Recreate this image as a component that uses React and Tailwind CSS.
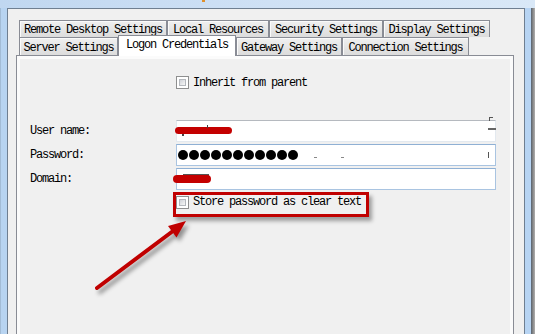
import React from 'react';

const mono = "font-[family-name:'Liberation_Mono',monospace] text-[12px] tracking-[-1.2px] text-black leading-none whitespace-nowrap";

function Tab({ label, w, selected }) {
  if (selected) {
    return (
      <div className={`${w} relative z-10 -mt-[2px] h-[21px] shrink-0 bg-white border border-b-0 border-[#898c95] flex justify-center pt-[3px]`}>
        <span className={mono}>{label}</span>
      </div>
    );
  }
  return (
    <div className={`${w} h-full shrink-0 bg-gradient-to-b from-[#f0f0f0] to-[#dcdcdc] border border-b-0 border-[#898c95] shadow-[inset_1px_1px_0_#fafafa] flex items-center justify-center pt-[2px]`}>
      <span className={mono}>{label}</span>
    </div>
  );
}

function Check() {
  return (
    <div className="w-[13px] h-[13px] shrink-0 border border-[#8e8f8f] bg-white p-[2px]">
      <div className="w-full h-full border border-[#b4b8bd] bg-gradient-to-br from-[#d0d3d8] to-[#f7f7f7]" />
    </div>
  );
}

function Field({ label, children }) {
  return (
    <div className="flex items-center h-[22px] shrink-0">
      <div className={`w-[156px] pl-[10px] ${mono}`}>{label}</div>
      {children}
    </div>
  );
}

export default function App() {
  return (
    <div className="w-[535px] h-[334px] overflow-hidden relative flex flex-col bg-[#c5dbf2]">
      {/* title bar remnant */}
      <div className="h-[8px] shrink-0 bg-gradient-to-r from-[#c0d7f0] via-[#cfe1f5] to-[#d9e8f7] flex">
        <div className="ml-[202px] w-[3px] h-[2px] bg-[#e0902a]" />
      </div>

      <div className="flex flex-1 min-h-0">
        <div className="w-[7px] shrink-0 bg-[#b8d4f1] border-l border-[#a3bcd6]" />

        <div className="w-[518px] shrink-0 overflow-hidden border-l border-t border-r border-[#6f7f91] bg-[#f0f0f0] pl-[8px] pr-[10px] pt-[11px] flex flex-col">
          {/* tab rows */}
          <div className="flex ml-[3px] h-[17px] shrink-0">
            <Tab label="Remote Desktop Settings" w="w-[148px]" />
            <Tab label="Local Resources" w="w-[102px]" />
            <Tab label="Security Settings" w="w-[114px]" />
            <Tab label="Display Settings" w="w-[107px]" />
          </div>
          <div className="flex ml-[3px] h-[18px] shrink-0">
            <Tab label="Server Settings" w="w-[99px]" />
            <Tab label="Logon Credentials" w="w-[118px]" selected />
            <Tab label="Gateway Settings" w="w-[106px]" />
            <Tab label="Connection Settings" w="w-[127px]" />
          </div>

          {/* tab panel */}
          <div className="h-[300px] shrink-0 border border-[#898c95] bg-[#fbfbfb] p-[3px]">
            <div className="h-full bg-[#f0f0f0] flex flex-col">
              <div className="mt-[17px] pl-[156px] flex items-center gap-[4px] h-[13px] shrink-0">
                <Check />
                <span className={mono}>Inherit from parent</span>
              </div>

              <div className="mt-[31px] flex flex-col gap-[2px] shrink-0">
                <Field label="User name:">
                  <div className="relative w-[320px] h-full bg-white border border-[#e3e9ef] border-t-[#b5b9bf]">
                    <div className="absolute left-[-2px] top-[6px] w-[57px] h-[7px] rounded-full bg-[#c40000] blur-[0.3px]" />
                    <div className="absolute left-[5px] top-[13px] w-[2px] h-[2px] bg-[#444]" />
                    <div className="absolute left-[30px] top-[4px] w-[1px] h-[3px] bg-[#444]" />
                    <div className="absolute right-[2px] top-[-4px] w-[4px] h-[4px] border-l border-t border-[#555]" />
                    <div className="absolute right-[-1px] top-[7px] w-[8px] h-[2px] bg-[#666]" />
                  </div>
                </Field>
                <Field label="Password:">
                  <div className="w-[320px] h-full bg-white border border-[#a9c4e1] border-t-[#8fb0d4] flex items-center pl-[1px]">
                    <div className="flex gap-[1px]">
                      {Array.from({ length: 11 }).map((_, i) => (
                        <div key={i} className="w-[10px] h-[10px] rounded-full bg-black" />
                      ))}
                    </div>
                    <div className="ml-[16px] mt-[5px] w-[3px] h-[1px] bg-[#888]" />
                    <div className="ml-[24px] mt-[5px] w-[3px] h-[1px] bg-[#888]" />
                    <div className="ml-auto mr-[6px] w-[1px] h-[6px] bg-[#555]" />
                  </div>
                </Field>
                <Field label="Domain:">
                  <div className="relative w-[320px] h-full bg-white border border-[#a9c4e1] border-t-[#8fb0d4]">
                    <div className="absolute left-[6px] top-[5px] w-[26px] h-[2px] bg-[#555]" />
                    <div className="absolute left-[-4px] top-[6px] w-[38px] h-[8px] rounded-full bg-[#c40000] blur-[0.3px]" />
                  </div>
                </Field>
              </div>

              <div className="relative mt-[2px] h-[25px] shrink-0 pl-[156px] pt-[4px] flex items-start gap-[4px]">
                <Check />
                <span className={mono}>Store password as clear text</span>
                <div className="absolute left-[153px] top-0 w-[196px] h-[25px] border-[3px] border-[#c00000] shadow-[3px_4px_4px_rgba(0,0,0,0.35)]" />
              </div>
            </div>
          </div>
        </div>

        <div className="w-[6px] shrink-0 bg-[#b7d4f3]" />
        <div className="w-[4px] shrink-0 bg-gradient-to-r from-[#56616d] via-[#8a8a8a] to-[#b0b0b0]" />
      </div>

      {/* annotation arrow */}
      <svg className="absolute left-0 top-0 pointer-events-none drop-shadow-[3px_4px_2px_rgba(0,0,0,0.4)]" width="535" height="334">
        <line x1="97" y1="288" x2="175" y2="229.5" stroke="#c00000" strokeWidth="4" strokeLinecap="round" />
        <polygon points="186,221 168,226 176.5,237.5" fill="#c00000" />
      </svg>
    </div>
  );
}
